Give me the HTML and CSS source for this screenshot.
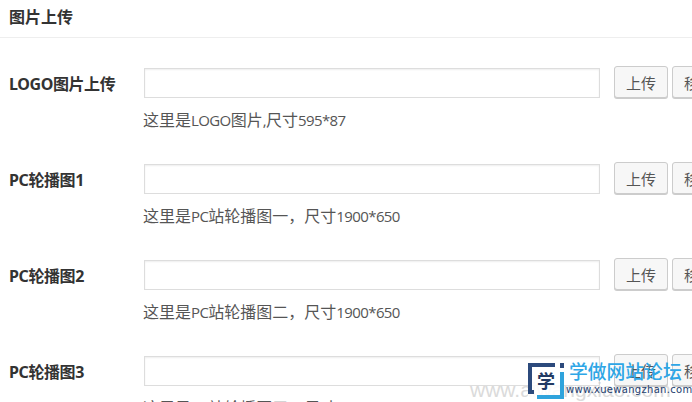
FILE: index.html

```html
<!DOCTYPE html>
<html lang="zh-CN">
<head>
  <meta charset="UTF-8" />
  <title>图片上传</title>
  <link rel="stylesheet" href="styles.css">
</head>
<body>
  <header class="title">图片上传</header>

  <main class="rows">
    <div class="row">
      <label class="name">LOGO图片上传</label>
      <div class="field">
        <div class="controls">
          <input class="text" type="text" />
          <button class="btn" type="button">上传</button>
          <button class="btn" type="button">移除</button>
        </div>
        <p class="hint">这里是<span class="latin">LOGO</span>图片<span class="latin">,</span>尺寸<span class="latin">595*87</span></p>
      </div>
    </div>
    <div class="row">
      <label class="name">PC轮播图1</label>
      <div class="field">
        <div class="controls">
          <input class="text" type="text" />
          <button class="btn" type="button">上传</button>
          <button class="btn" type="button">移除</button>
        </div>
        <p class="hint">这里是<span class="latin">PC</span>站轮播图一，尺寸<span class="latin">1900*650</span></p>
      </div>
    </div>
    <div class="row">
      <label class="name">PC轮播图2</label>
      <div class="field">
        <div class="controls">
          <input class="text" type="text" />
          <button class="btn" type="button">上传</button>
          <button class="btn" type="button">移除</button>
        </div>
        <p class="hint">这里是<span class="latin">PC</span>站轮播图二，尺寸<span class="latin">1900*650</span></p>
      </div>
    </div>
    <div class="row">
      <label class="name">PC轮播图3</label>
      <div class="field">
        <div class="controls">
          <input class="text" type="text" />
          <button class="btn" type="button">上传</button>
          <button class="btn" type="button">移除</button>
        </div>
        <p class="hint">这里是<span class="latin">PC</span>站轮播图三，尺寸<span class="latin">1900*650</span></p>
      </div>
    </div>
  </main>

  <div class="ghost">www.aiwangxiao.com</div>
  <div class="mark">
    <svg class="mark-logo" width="36" height="36" viewBox="0 0 36 36">
      <path d="M27 2H2v27h4" fill="none" stroke="#2c4a7c" stroke-width="4" />
      <path d="M34 9v25H9" fill="none" stroke="#2fa3dc" stroke-width="4" />
      <path d="M34 0v5" fill="none" stroke="#2c4a7c" stroke-width="4" />
      <text x="18" y="25" class="mark-glyph" text-anchor="middle">学</text>
    </svg>
    <div class="mark-text">
      <div class="mark-name">学做网站论坛</div>
      <div class="mark-url">www.xuewangzhan.com</div>
    </div>
  </div>
</body>
</html>
```

FILE: styles.css

```css
html, body {
  height: 402px;
  overflow: hidden;
}
body {
  margin: 0;
  position: relative;
  background: #fff;
  color: #333;
  font-family: 'Open Sans', 'Noto Sans CJK SC', sans-serif;
  font-size: 16px;
}
.title {
  height: 37px;
  line-height: 35px;
  padding-left: 9px;
  border-bottom: 1px solid #eee;
  font-weight: 600;
  font-size: 16px;
  color: #333;
}
.rows {
  padding-top: 30px;
}
.row {
  display: flex;
  height: 96px;
  padding-left: 9px;
}
.name {
  width: 135px;
  flex: none;
  line-height: 32px;
  font-family: 'Noto Sans', 'Noto Sans CJK SC', sans-serif;
  font-weight: 700;
  font-size: 16px;
  letter-spacing: -0.4px;
  color: #333;
}
.field {
  flex: none;
  width: 560px;
}
.controls {
  display: flex;
  align-items: flex-start;
}
.text {
  box-sizing: border-box;
  width: 456px;
  height: 30px;
  margin: 0 14px 0 0;
  padding: 0 6px;
  border: 1px solid #ddd;
  box-shadow: inset 0 1px 2px rgba(0,0,0,0.07);
  background: #fff;
  flex: none;
}
.btn {
  box-sizing: border-box;
  width: 54px;
  height: 32px;
  margin: -2px 4px 0 0;
  padding: 0;
  flex: none;
  border: 1px solid #ccc;
  border-radius: 3px;
  background: #f7f7f7;
  box-shadow: 0 1px 0 #ccc;
  color: #555;
  font-family: inherit;
  font-size: 15px;
}
.hint {
  margin: 11px 0 0 -1px;
  line-height: 20px;
  font-family: 'Noto Sans CJK SC', sans-serif;
  font-size: 16px;
  color: #555;
}
.latin {
  font-family: 'Open Sans', sans-serif;
  font-size: 15px;
  letter-spacing: -0.6px;
}
.ghost {
  position: absolute;
  left: 470px;
  top: 378px;
  color: #ccc;
  font-family: 'Liberation Sans', sans-serif;
  font-size: 21px;
  white-space: nowrap;
  opacity: 0.7;
}
.mark {
  position: absolute;
  left: 528px;
  top: 363px;
  display: flex;
  gap: 5px;
}
.mark-logo {
  flex: none;
  background: rgba(255,255,255,0.85);
}
.mark-glyph {
  font-family: 'Noto Sans CJK SC', sans-serif;
  font-size: 18px;
  font-weight: 700;
  fill: #223a63;
}
.mark-text {
  white-space: nowrap;
}
.mark-name {
  margin-top: -4px;
  color: #2ea6e6;
  font-family: 'Noto Sans CJK SC', sans-serif;
  font-size: 18.8px;
  font-weight: 500;
  line-height: 24px;
}
.mark-url {
  margin: 1px 0 0 -3px;
  color: #24406f;
  font-family: 'DejaVu Sans', sans-serif;
  font-size: 10px;
  line-height: 12px;
  letter-spacing: 0.3px;
}
```
